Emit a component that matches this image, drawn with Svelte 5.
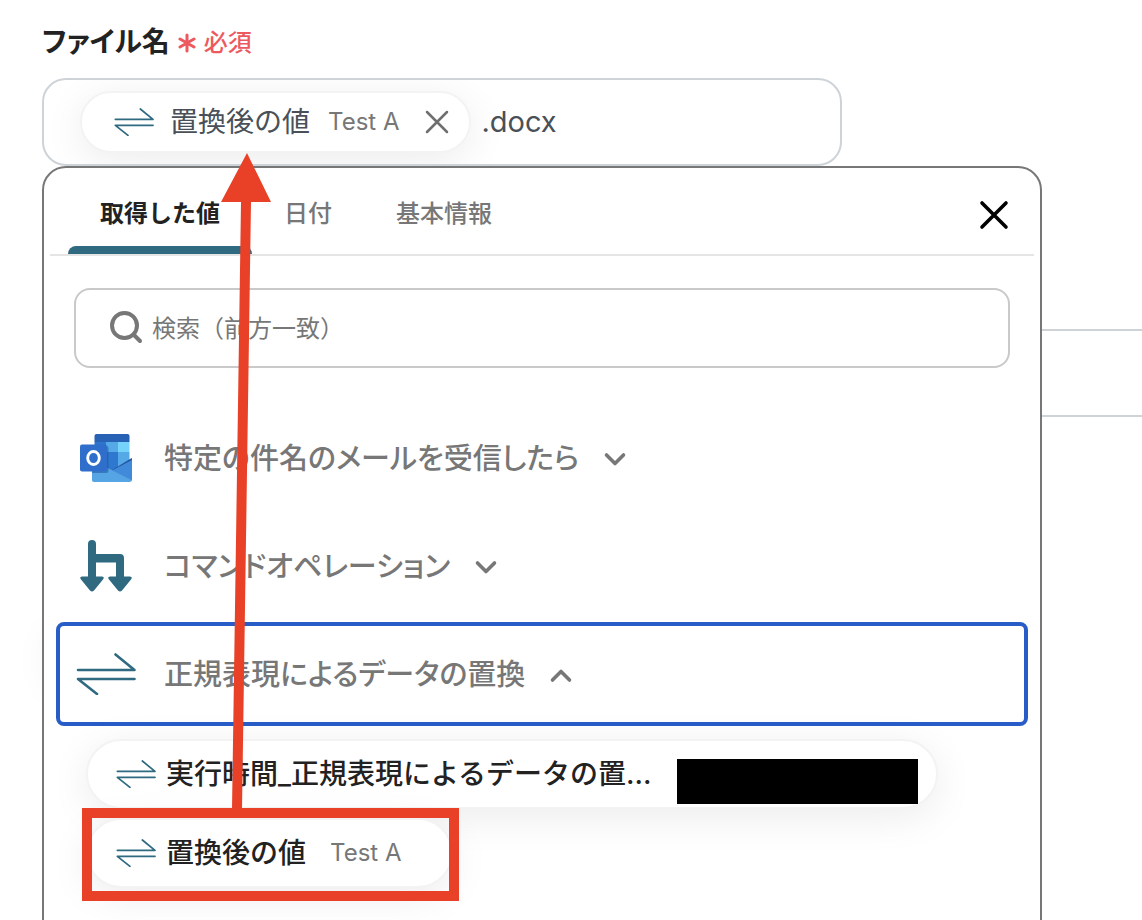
<script lang="ts">
  interface Group {
    icon: 'outlook' | 'branch' | 'replace'
    label: string
  }

  const TABS = ['取得した値', '日付', '基本情報']

  const GROUPS: Group[] = [
    { icon: 'outlook', label: '特定の件名のメールを受信したら' },
    { icon: 'branch',  label: 'コマンドオペレーション' },
    { icon: 'replace', label: '正規表現によるデータの置換' },
  ]

  let activeTab = $state(0)
  let openGroup = $state(2)
  let fileName = $state('.docx')
  let query = $state('')
</script>

{#snippet replaceIcon(cls: string)}
  <svg class={cls} viewBox="0 0 60 42" fill="none" stroke="#2f6a80" stroke-width="2.6" stroke-linecap="round" stroke-linejoin="round" aria-hidden="true">
    <path d="M2 17H58.5L39.5 1.5" />
    <path d="M58.5 26H2L21 41" />
  </svg>
{/snippet}

<main>
  <div class="label-row">
    <label for="file-name">ファイル名</label>
    <span class="required">
      <svg viewBox="0 0 18 20" fill="none" stroke="#ec5a60" stroke-width="3" stroke-linecap="round" aria-hidden="true">
        <path d="M9 2V18M2 6L16 14M16 6L2 14" />
      </svg>
      必須
    </span>
  </div>

  <div class="anchor">
    <div class="field">
      <span class="token">
        {@render replaceIcon('icon-sm')}
        <span class="token-name">置換後の値</span>
        <span class="sample">Test A</span>
        <button class="plain" type="button" aria-label="削除">
          <svg class="remove" viewBox="0 0 24 24" fill="none" stroke="#6f6f6f" stroke-width="2.5" stroke-linecap="round" aria-hidden="true">
            <path d="M2 2L22 22M22 2L2 22" />
          </svg>
        </button>
      </span>
      <input id="file-name" type="text" bind:value={fileName} />
    </div>

    <div class="panel">
      <header>
        <div class="tabs" role="tablist">
          {#each TABS as tab, i}
            <button class="tab" type="button" role="tab" aria-selected={i === activeTab} onclick={() => activeTab = i}>{tab}</button>
          {/each}
        </div>
        <button class="plain" type="button" aria-label="閉じる">
          <svg class="close" viewBox="0 0 32 32" fill="none" stroke="#000" stroke-width="3.6" stroke-linecap="round" aria-hidden="true">
            <path d="M4 4L28 28M28 4L4 28" />
          </svg>
        </button>
      </header>

      <div class="search">
        <svg viewBox="0 0 34 34" fill="none" stroke="#777" stroke-width="4" stroke-linecap="round" aria-hidden="true">
          <circle cx="14.5" cy="14.5" r="12.5" />
          <path d="M23.5 23.5L30 30" />
        </svg>
        <input type="text" aria-label="検索" placeholder="検索（前方一致）" bind:value={query} />
      </div>

      <div class="groups">
        {#each GROUPS as group, i}
          <button class="group" class:open={i === openGroup} type="button" aria-expanded={i === openGroup} onclick={() => openGroup = i}>
            <span class="group-icon">
              {#if group.icon === 'outlook'}
                <svg class="icon-lg" viewBox="0 0 52 48" aria-hidden="true">
                  <path d="M16.5 0H47.5Q49.5 0 49.5 2V8H14.5V2Q14.5 0 16.5 0Z" fill="#2862b4" />
                  <path d="M14.5 8H26V18H14.5Z" fill="#2f75cc" />
                  <path d="M26 8H38V18H26Z" fill="#55a9e6" />
                  <path d="M38 8H49.5V18H38Z" fill="#75d3fa" />
                  <path d="M14.5 18H26V36H14.5Z" fill="#235ca9" />
                  <path d="M26 18H38V37H26Z" fill="#2f78cf" />
                  <path d="M38 18H49.5V32H38Z" fill="#55a9e6" />
                  <path d="M50 25L52 24V28L32 38L27 35V33L32 36Z" fill="#2456a3" />
                  <path d="M12 26L52 46Q51.5 48 49.5 48H14Q12 48 12 46Z" fill="#55a5e5" />
                  <path d="M32 36.5L52 26V46.5Z" fill="#408ad9" />
                  <path d="M14 12H26.5Q28.5 12 28.5 14V37Q28.5 39 26.5 39H12V13Z" fill="#1d4f94" opacity=".5" />
                  <rect x="0" y="10.5" width="27" height="27" rx="2" fill="#2f6fcb" />
                  <ellipse cx="13.500" cy="24" rx="5.800" ry="6.500" fill="none" stroke="#fff" stroke-width="2.900" />
                </svg>
              {:else if group.icon === 'branch'}
                <svg class="icon-lg" viewBox="0 0 52 54" fill="#2f6a80" aria-hidden="true">
                  <path d="M8 5Q8 1 12 1T16 5V15H40Q44 15 44 19V37.5H50Q53 38 51 40.5L42 51.5Q40 53.5 38 51.5L29 40.5Q27 38 30 37.5H36V23.5H16V37.5H22Q25 38 23 40.5L14 51.5Q12 53.5 10 51.5L1 40.5Q-1 38 2 37.5H8Z" />
                </svg>
              {:else}
                {@render replaceIcon('icon-replace')}
              {/if}
            </span>
            <span class="group-label">{group.label}</span>
            <svg class="chevron" viewBox="0 0 24 24" fill="none" stroke="#777" stroke-width="3.6" stroke-linecap="round" stroke-linejoin="round" aria-hidden="true">
              <path d={i === openGroup ? 'M3.5 18L12 9.5L20.5 18' : 'M3.5 9L12 17.5L20.5 9'} />
            </svg>
          </button>
        {/each}
      </div>

      <ul>
        <li>
          <button class="token value" type="button">
            {@render replaceIcon('icon-sm')}
            <span>実行時間_正規表現によるデータの置…</span>
            <span class="redacted"></span>
          </button>
        </li>
        <li>
          <button class="token value short" type="button">
            {@render replaceIcon('icon-sm')}
            <span>置換後の値</span>
            <span class="sample">Test A</span>
          </button>
        </li>
      </ul>
    </div>
  </div>

  <!-- fields further down the form, mostly under the open panel -->
  <div class="next-field"></div>
  <div class="token next-token"></div>

  <!-- drag hint: framed value in the list, arrow up to the field -->
  <svg class="hint" width="480" height="920" viewBox="0 0 480 920" aria-hidden="true">
    <path d="M247 153L271 202H251L242 810H232L241 202H221Z" fill="#e94127" />
    <rect x="87" y="813" width="367" height="83" fill="none" stroke="#e94127" stroke-width="10" />
  </svg>
</main>

<style>
  :global(body) { background: #fff; }
  main {
    position: relative;
    box-sizing: border-box;
    min-height: 100vh;
    padding: 22px 42px 0;
    overflow: hidden;
    font-family: Inter, "Noto Sans CJK JP", sans-serif;
    font-size: 28px;
    line-height: 40px;
    color: #222;
  }
  button, input {
    font: inherit;
    color: inherit;
    border: 0;
    margin: 0;
    padding: 0;
    background: none;
  }
  button { cursor: pointer; }
  input { outline: 0; min-width: 0; }
  svg { display: block; flex: none; }
  .plain { display: flex; }

  .label-row {
    display: flex;
    align-items: center;
    gap: 8px;
    height: 40px;
    margin-bottom: 16px;
  }
  label { font-weight: 700; font-feature-settings: "palt"; }
  .required {
    display: flex;
    align-items: center;
    gap: 8px;
    padding-top: 2px;
    font-size: 24px;
    font-weight: 500;
    color: #ec5a60;
  }
  .required svg { width: 18px; height: 20px; }

  .anchor { position: relative; }
  .field {
    display: flex;
    align-items: center;
    gap: 10px;
    box-sizing: border-box;
    max-width: 800px;
    height: 88px;
    padding: 0 36px;
    border: 2px solid #ced3d8;
    border-radius: 24px;
    overflow: hidden;
    font-size: 29px;
    color: #495057;
  }
  .field input { flex: 1; }
  .token {
    display: flex;
    align-items: center;
    box-sizing: border-box;
    height: 62px;
    padding: 0 20px 0 32px;
    border: 2px solid #f3f3f3;
    border-radius: 35px;
    background: #fff;
    box-shadow: 0 8px 40px rgba(0, 0, 0, 0.08);
    white-space: nowrap;
  }
  .token-name {
    margin: 0 18px 0 16px;
    font-size: 28px;
  }
  .sample {
    font-size: 24px;
    font-weight: 400;
    color: #777;
  }
  .field .sample { margin-right: 26px; }
  .remove { width: 24px; height: 24px; }
  .icon-sm { width: 40px; height: 28px; }

  .panel {
    position: absolute;
    top: 100%;
    left: 0;
    z-index: 1;
    box-sizing: border-box;
    width: 100%;
    max-width: 1000px;
    padding-bottom: 80px;
    border: 2px solid #777;
    border-radius: 24px;
    background: #fff;
  }
  header {
    display: flex;
    align-items: center;
    justify-content: space-between;
    height: 86px;
    margin: 0 6px;
    padding: 0 24px 0 18px;
    border-bottom: 2px solid #e5e5e5;
  }
  .tabs { display: flex; height: 100%; }
  .tab {
    padding: 14px 32px 0;
    border-bottom: 8px solid transparent;
    font-size: 24px;
    font-weight: 500;
    color: #777;
    position: relative;
  }
  .tab[aria-selected="true"] { font-weight: 700; color: #222; }
  .tab[aria-selected="true"]::after {
    content: "";
    position: absolute;
    inset: auto 0 -8px;
    height: 8px;
    border-radius: 8px 8px 0 0;
    background: #2f6a80;
  }
  .close { width: 32px; height: 32px; margin-top: 8px; }

  .search {
    display: flex;
    align-items: center;
    gap: 8px;
    box-sizing: border-box;
    height: 80px;
    margin: 32px 30px 38px;
    padding: 0 34px;
    border: 2px solid #c9c9c9;
    border-radius: 16px;
    font-size: 24px;
  }
  .search svg { width: 34px; height: 34px; }
  .search input { flex: 1; padding-top: 2px; }
  .search input::placeholder { color: #777; opacity: 1; }

  .groups {
    display: grid;
    gap: 4px;
    margin: 0 12px;
  }
  .group {
    display: flex;
    align-items: center;
    gap: 28px;
    height: 104px;
    padding: 0 16px;
    border: 4px solid transparent;
    border-radius: 8px;
    font-size: 29px;
    font-weight: 500;
    font-feature-settings: "palt";
    color: #777;
    text-align: left;
  }
  .group.open { border-color: #285dc8; }
  .group-icon {
    display: flex;
    justify-content: center;
    width: 60px;
  }
  .group-label { padding-top: 2px; }
  .icon-lg { width: 52px; }
  .icon-replace { width: 60px; height: 42px; }
  .chevron {
    width: 24px;
    height: 24px;
    margin-left: -4px;
  }

  ul {
    display: grid;
    gap: 9px;
    justify-items: start;
    margin: 13px 42px 0;
    padding: 0;
    list-style: none;
  }
  .value {
    gap: 10px;
    height: 70px;
    padding: 0 18px 0 28px;
    font-weight: 500;
  }
  .value .sample { margin-left: 14px; }
  .short { padding-right: 50px; }
  .redacted {
    align-self: flex-end;
    width: 241px;
    height: 45px;
    margin: 0 0 3px 15px;
    background: #000;
  }

  .next-field {
    height: 84px;
    margin: 163px -80px 0 0;
    border: 2px solid #ced3d8;
    border-radius: 24px;
  }
  .next-token {
    width: 300px;
    margin: 203px 8px 0;
  }
  .hint {
    position: absolute;
    top: 0;
    left: 0;
    z-index: 2;
    pointer-events: none;
  }
</style>
